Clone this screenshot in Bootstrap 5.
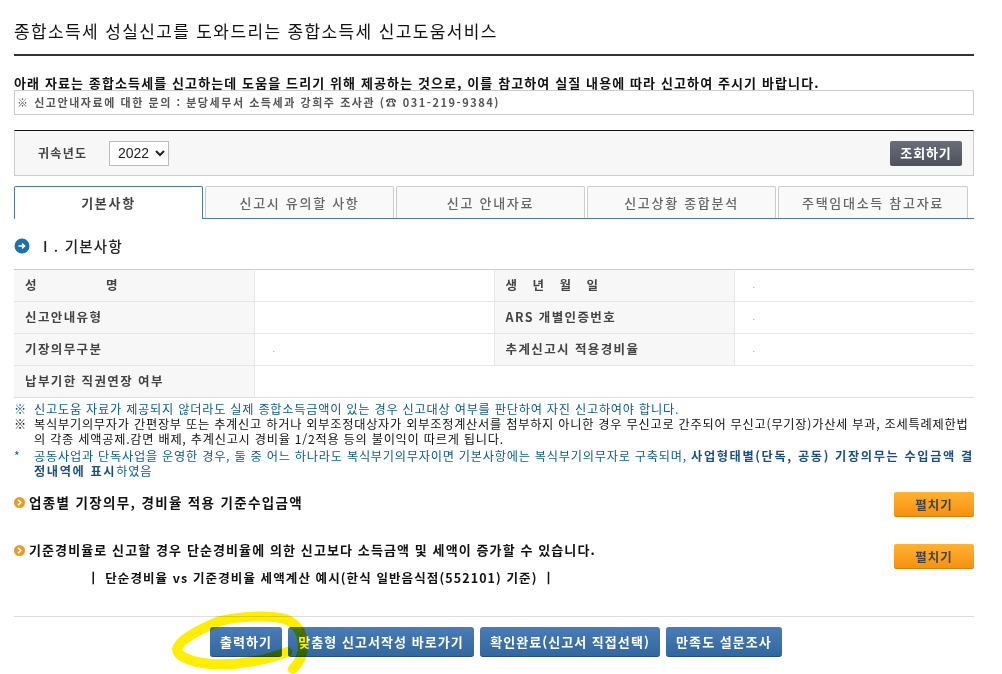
<!DOCTYPE html>
<html lang="ko">
<head>
  <meta charset="UTF-8" />
  <title>종합소득세 신고도움서비스</title>
  <link href="https://cdn.jsdelivr.net/npm/bootstrap@5.3.0/dist/css/bootstrap.min.css" rel="stylesheet" />
  <style>
    html, body { height: 674px; overflow: hidden; }
    body { font-family: "Noto Sans CJK KR", "Liberation Sans", sans-serif; color: #111; background: #fff; font-size: 12px; line-height: 1.2; }
    .page-wrap { width: 960px; margin-left: 14px; position: relative; padding-top: 20px; }
    .page-title { font-size: 17px; font-weight: 400; letter-spacing: 1.37px; line-height: 22px; margin: 0; height: 34px; }
    .title-rule { height: 2px; background: #333; margin-bottom: 19px; }
    .lead-note { font-size: 13px; font-weight: 700; line-height: 15px; height: 15px; color: #111; letter-spacing: 1.11px; white-space: nowrap; }
    .contact-box { height: 25px; border: 1px solid #ccc; padding-left: 2px; font-size: 11px; font-weight: 700; color: #555; letter-spacing: 1.55px; line-height: 23px; white-space: nowrap; }
    .search-box { height: 46px; margin-top: 15px; background: #f7f7f7; border: 1px solid #ccc; border-top: 1px solid #111; padding: 9px 11px 9px 23px; }
    .search-label { font-size: 12px; font-weight: 700; color: #444; width: 71px; letter-spacing: 1.3px; }
    .year-select { width: 60px; height: 25px; font-family: "Liberation Sans", sans-serif; font-size: 14px; border: 1px solid #bbb; background: #fff; color: #222; padding: 0 0 0 4px; border-radius: 0; }
    .btn-search { width: 72px; height: 25px; border: 0; border-radius: 2px; background: linear-gradient(#6a6e79, #4d515c); color: #fff; font-size: 13px; font-weight: 700; letter-spacing: .9px; padding: 0; }
    .tab-row { margin-top: 10px; height: 33px; border-bottom: 1px solid #4f7a9f; gap: 2px; }
    .tab-item { height: 32px; width: 189px; background: #f9f9f9; border: 1px solid #ccc; border-bottom: 0; border-radius: 2px 2px 0 0; font-size: 13px; font-weight: 500; color: #666; letter-spacing: 1.7px; }
    .tab-item.tab-on { height: 33px; background: #fff; border-color: #4f7a9f; color: #444; font-weight: 700; margin-bottom: -1px; }
    .tab-item.tab-last { width: 190px; }
    .sec-head { margin-top: 17px; height: 20px; gap: 8px; font-size: 14.5px; font-weight: 500; color: #222; letter-spacing: 1.25px; }
    .info-table { width: 960px; margin-top: 13px; border-top: 1px solid #ccc; border-bottom: 1px solid #ddd; table-layout: fixed; border-collapse: collapse; }
    .info-table th, .info-table td { height: 32px; padding: 0; border-bottom: 1px solid #e6e6e6; width: 240px; }
    .info-table tr:last-child th, .info-table tr:last-child td { border-bottom: 0; }
    .info-table th { background: #f7f7f7; font-size: 12.5px; font-weight: 700; color: #444; padding: 0 0 2px 11px; border-right: 1px solid #e6e6e6; letter-spacing: 1.4px; white-space: nowrap; }
    .info-table td { border-right: 1px solid #e6e6e6; font-size: 9px; color: #aaa; padding-left: 18px; }
    .info-table td:last-child { border-right: 0; }
    .spread-name { display: flex; justify-content: space-between; width: 94px; }
    .note-list { margin: 4px 0 0; padding: 0; list-style: none; font-size: 12.2px; line-height: 15px; color: #0a5c8c; letter-spacing: .76px; }
    .note-list li { display: flex; }
    .note-list li:last-child { margin-top: 2px; }
    .note-list .note-mark { flex: 0 0 20px; }
    .note-list .note-body { white-space: nowrap; }
    .note-list .note-black { color: #111; }
    .note-list b { color: #1b4f82; font-weight: 700; letter-spacing: 1.65px; }
    .fold-row { display: flex; justify-content: space-between; align-items: flex-start; }
    .fold-row-one { margin-top: 13px; }
    .fold-row-two { margin-top: 27px; }
    .fold-title { display: flex; align-items: center; gap: 4px; font-weight: 700; color: #111; height: 20px; white-space: nowrap; }
    .fold-one { font-size: 13.5px; letter-spacing: 1.35px; margin-top: 0; }
    .fold-two { font-size: 13px; letter-spacing: 1.1px; margin-top: -4px; }
    .btn-fold { width: 80px; height: 25px; padding: 0; border: 0; border-bottom: 1px solid #d97f0a; border-radius: 2px; background: linear-gradient(#ffb233, #f8900f); color: #444; font-size: 12.5px; font-weight: 700; letter-spacing: 1px; }
    .compare-line { font-size: 12.5px; font-weight: 700; color: #111; padding-left: 73px; margin-top: 1px; letter-spacing: 1.1px; white-space: nowrap; }
    .foot-bar { border-top: 1px solid #ddd; margin-top: 31px; padding-top: 10px; padding-left: 4px; gap: 6px; }
    .btn-foot { height: 30px; padding: 0; border: 0; border-bottom: 1px solid #24507f; border-radius: 3px; background: linear-gradient(#4a7cb5, #32679f); color: #fff; font-size: 13px; font-weight: 700; letter-spacing: 1.05px; white-space: nowrap; }
    .foot-print { width: 72px; }
    .foot-custom { width: 186px; }
    .foot-confirm { width: 180px; }
    .foot-survey { width: 116px; }
    .marker-ink { position: absolute; left: 160px; top: 604px; width: 150px; height: 70px; mix-blend-mode: multiply; pointer-events: none; }
  </style>
</head>
<body>
  <div class="page-wrap">
    <h1 class="page-title">종합소득세 성실신고를 도와드리는 종합소득세 신고도움서비스</h1>
    <div class="title-rule"></div>
    <div class="lead-note">아래 자료는 종합소득세를 신고하는데 도움을 드리기 위해 제공하는 것으로, 이를 참고하여 실질 내용에 따라 신고하여 주시기 바랍니다.</div>
    <div class="contact-box">※ 신고안내자료에 대한 문의 : 분당세무서 소득세과 강희주 조사관 (☎ 031-219-9384)</div>

    <div class="search-box d-flex align-items-center">
      <span class="search-label">귀속년도</span>
      <select class="year-select"><option>2022</option></select>
      <button type="button" class="btn-search ms-auto">조회하기</button>
    </div>

    <div class="tab-row d-flex">
      <div class="tab-item tab-on d-flex align-items-center justify-content-center">기본사항</div>
      <div class="tab-item d-flex align-items-center justify-content-center">신고시 유의할 사항</div>
      <div class="tab-item d-flex align-items-center justify-content-center">신고 안내자료</div>
      <div class="tab-item d-flex align-items-center justify-content-center">신고상황 종합분석</div>
      <div class="tab-item tab-last d-flex align-items-center justify-content-center">주택임대소득 참고자료</div>
    </div>

    <div class="sec-head d-flex align-items-center">
      <svg width="16" height="16" viewBox="0 0 16 16"><circle cx="8" cy="8" r="7.5" fill="#1f6fa8"/><path d="M4.5 8h6M8 5.6 10.6 8 8 10.4" fill="none" stroke="#fff" stroke-width="1.5"/></svg>
      <span>Ⅰ. 기본사항</span>
    </div>

    <table class="info-table">
      <tr><th><span class="spread-name"><span>성</span><span>명</span></span></th><td></td><th><span class="spread-name"><span>생</span><span>년</span><span>월</span><span>일</span></span></th><td>.</td></tr>
      <tr><th>신고안내유형</th><td></td><th>ARS 개별인증번호</th><td>.</td></tr>
      <tr><th>기장의무구분</th><td>.</td><th>추계신고시 적용경비율</th><td>.</td></tr>
      <tr><th>납부기한 직권연장 여부</th><td colspan="3"></td></tr>
    </table>

    <ul class="note-list">
      <li><span class="note-mark">※</span><span class="note-body">신고도움 자료가 제공되지 않더라도 실제 종합소득금액이 있는 경우 신고대상 여부를 판단하여 자진 신고하여야 합니다.</span></li>
      <li class="note-black"><span class="note-mark">※</span><span class="note-body">복식부기의무자가 간편장부 또는 추계신고 하거나 외부조정대상자가 외부조정계산서를 첨부하지 아니한 경우 무신고로 간주되어 무신고(무기장)가산세 부과, 조세특례제한법<br>의 각종 세액공제.감면 배제, 추계신고시 경비율 1/2적용 등의 불이익이 따르게 됩니다.</span></li>
      <li><span class="note-mark">*</span><span class="note-body">공동사업과 단독사업을 운영한 경우, 둘 중 어느 하나라도 복식부기의무자이면 기본사항에는 복식부기의무자로 구축되며, <b>사업형태별(단독, 공동) 기장의무는 수입금액 결<br>정내역에 표시</b>하였음</span></li>
    </ul>

    <div class="fold-row fold-row-one">
      <div class="fold-title fold-one">
        <svg width="11" height="11" viewBox="0 0 11 11"><circle cx="5.5" cy="5.5" r="5.5" fill="#eb9a2a"/><path d="M4 2.8 6.8 5.5 4 8.2" fill="none" stroke="#fff" stroke-width="1.5"/></svg>
        <span>업종별 기장의무, 경비율 적용 기준수입금액</span>
      </div>
      <button type="button" class="btn-fold">펼치기</button>
    </div>

    <div class="fold-row fold-row-two">
      <div class="fold-title fold-two">
        <svg width="11" height="11" viewBox="0 0 11 11"><circle cx="5.5" cy="5.5" r="5.5" fill="#eb9a2a"/><path d="M4 2.8 6.8 5.5 4 8.2" fill="none" stroke="#fff" stroke-width="1.5"/></svg>
        <span>기준경비율로 신고할 경우 단순경비율에 의한 신고보다 소득금액 및 세액이 증가할 수 있습니다.</span>
      </div>
      <button type="button" class="btn-fold">펼치기</button>
    </div>
    <div class="compare-line">┃ 단순경비율 vs 기준경비율 세액계산 예시(한식 일반음식점(552101) 기준) ┃</div>

    <div class="foot-bar d-flex justify-content-center">
      <button type="button" class="btn-foot foot-print">출력하기</button>
      <button type="button" class="btn-foot foot-custom">맞춤형 신고서작성 바로가기</button>
      <button type="button" class="btn-foot foot-confirm">확인완료(신고서 직접선택)</button>
      <button type="button" class="btn-foot foot-survey">만족도 설문조사</button>
    </div>
  </div>

  <svg class="marker-ink" viewBox="0 0 150 70"><path d="M127 48C110 55 80 62 50 60C30 58 17 52 17 45C20 35 40 25 60 17C80 12 110 11 125 15C138 20 143 30 143 42C143 52 138 60 133 65" fill="none" stroke="#ffee00" stroke-width="10" stroke-linecap="round" stroke-linejoin="round"/></svg>
</body>
</html>
